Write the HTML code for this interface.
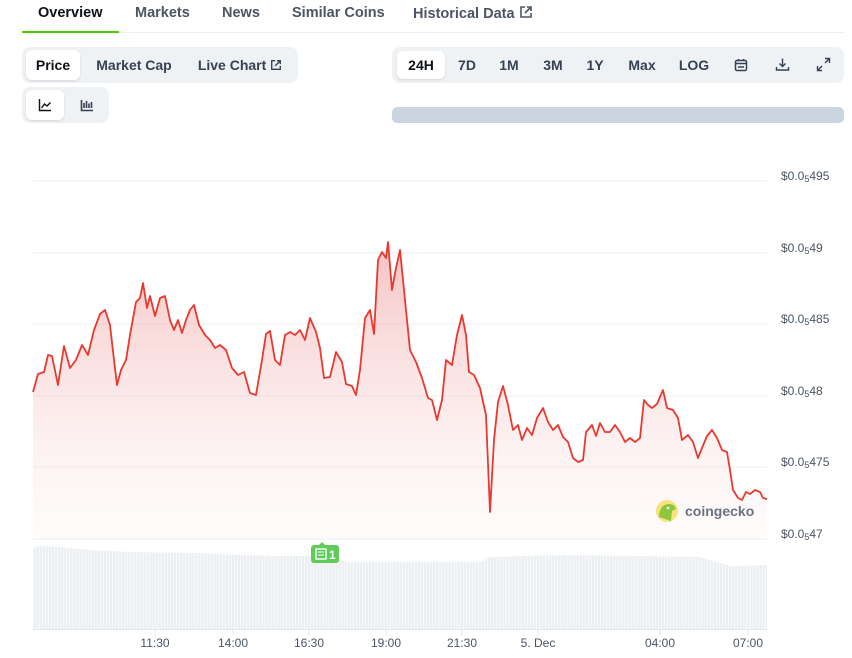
<!DOCTYPE html>
<html><head><meta charset="utf-8"><style>
*{margin:0;padding:0;box-sizing:border-box}
body{width:852px;height:658px;background:#fff;font-family:"Liberation Sans",sans-serif;position:relative;overflow:hidden;color:#4b5563}
.abs{position:absolute}
.tab{position:absolute;top:5px;font-size:14.5px;font-weight:bold;color:#4b5563}
.seg{position:absolute;background:#eff2f5;border-radius:8px}
.btn{position:absolute;font-size:14px;font-weight:bold;color:#364152;top:0;height:30px;line-height:30px;text-align:center}
.on{background:#fff;border-radius:6px;box-shadow:0 1px 2px rgba(0,0,0,.12);color:#0d1217}
.yl{position:absolute;left:781px;font-size:12px;color:#4b5563}
.yl sub{font-size:9px;vertical-align:-2px}
.xl{position:absolute;top:636px;font-size:12px;color:#4b5563;transform:translateX(-50%)}
</style></head><body>
<div class="tab" style="left:38px;color:#0d1217">Overview</div>
<div class="tab" style="left:135px">Markets</div>
<div class="tab" style="left:222px">News</div>
<div class="tab" style="left:292px">Similar Coins</div>
<div class="tab" style="left:413px">Historical Data <svg width="14" height="14" viewBox="0 0 14 14" style="vertical-align:-1px"><path d="M6 2H2v10h10V8M8 2h4v4M12 2L6 8" fill="none" stroke="#4b5563" stroke-width="1.6"/></svg></div>
<div class="abs" style="left:22px;top:32px;width:822px;height:1px;background:#eceff2"></div>
<div class="abs" style="left:22px;top:31px;width:97px;height:2px;background:#4bcc00"></div>

<div class="seg" style="left:22px;top:47px;width:276px;height:36px">
 <div class="btn on" style="left:4px;top:3px;width:54px">Price</div>
 <div class="btn" style="left:66px;top:3px;width:92px">Market Cap</div>
 <div class="btn" style="left:168px;top:3px;width:100px">Live Chart <svg width="12" height="12" viewBox="0 0 14 14" style="vertical-align:-1px"><path d="M6 2H2v10h10V8M8 2h4v4M12 2L6 8" fill="none" stroke="#364152" stroke-width="1.6"/></svg></div>
</div>
<div class="seg" style="left:22px;top:87px;width:87px;height:36px">
 <div class="btn on" style="left:4px;top:3px;width:38px"><svg width="14" height="14" viewBox="0 0 14 14" style="vertical-align:-2px"><path d="M1.5 1v11.5H13M3.5 10l3-4 2.5 2 3.5-3.5" fill="none" stroke="#0d1217" stroke-width="1.4"/></svg></div>
 <div class="btn" style="left:46px;top:3px;width:38px"><svg width="14" height="14" viewBox="0 0 14 14" style="vertical-align:-2px"><path d="M1.5 2v10.5H13M4 10V5M6.5 10V3M9 10V5.5M11.5 10V4" fill="none" stroke="#364152" stroke-width="1.6"/></svg></div>
</div>

<div class="seg" style="left:392px;top:47px;width:452px;height:36px">
 <div class="btn on" style="left:5px;top:4px;width:48px;height:28px;line-height:28px">24H</div>
 <div class="btn" style="left:58px;top:3px;width:34px">7D</div>
 <div class="btn" style="left:100px;top:3px;width:34px">1M</div>
 <div class="btn" style="left:143px;top:3px;width:36px">3M</div>
 <div class="btn" style="left:187px;top:3px;width:32px">1Y</div>
 <div class="btn" style="left:228px;top:3px;width:44px">Max</div>
 <div class="btn" style="left:280px;top:3px;width:44px">LOG</div>
 <svg class="abs" style="left:342px;top:11px" width="14" height="14" viewBox="0 0 14 14"><rect x="1.5" y="2.5" width="11" height="10" rx="1.5" fill="none" stroke="#364152" stroke-width="1.5"/><path d="M1.5 5.5h11M4.5 1v2M9.5 1v2M4 9h6" stroke="#364152" stroke-width="1.5"/></svg>
 <svg class="abs" style="left:383px;top:10px" width="15" height="15" viewBox="0 0 15 15"><path d="M7.5 1.5v8M4.5 6.5l3 3 3-3M1.5 10v3h12v-3" fill="none" stroke="#364152" stroke-width="1.4"/></svg>
 <svg class="abs" style="left:424px;top:10px" width="15" height="15" viewBox="0 0 15 15"><path d="M9 1.5h4.5V6M13.5 1.5L9 6M6 13.5H1.5V9M1.5 13.5L6 9" fill="none" stroke="#364152" stroke-width="1.4"/></svg>
</div>
<div class="abs" style="left:392px;top:107px;width:452px;height:16px;background:#cbd5df;border-radius:5px"></div>

<svg class="abs" style="left:0;top:0" width="852" height="658">
 <defs><linearGradient id="g" x1="0" y1="0" x2="0" y2="1"><stop offset="0" stop-color="#f0a8a8" stop-opacity=".7"/><stop offset="1" stop-color="#fde8e8" stop-opacity=".15"/></linearGradient>
 <pattern id="bars" width="3.05" height="10" patternUnits="userSpaceOnUse"><rect width="2.4" height="10" fill="#eceff2"/></pattern></defs>
 <g stroke="#eceff2" stroke-width="1">
  <line x1="33" y1="181" x2="767" y2="181"/><line x1="33" y1="253" x2="767" y2="253"/><line x1="33" y1="324" x2="767" y2="324"/><line x1="33" y1="396" x2="767" y2="396"/><line x1="33" y1="467" x2="767" y2="467"/><line x1="33" y1="539" x2="767" y2="539"/>
 </g>
 <polygon fill="url(#bars)" points="33,548 40,546 60,547 90,550 130,552 200,553 240,555 280,556 310,556 340,560 350,562 480,562 490,557 560,555 640,556 700,557 730,566 767,565 767,629 33,629"/>
 <line x1="33" y1="629.5" x2="767" y2="629.5" stroke="#e5e7eb"/>
 <g stroke="#e5e7eb"><line x1="155" y1="630" x2="155" y2="636"/><line x1="233" y1="630" x2="233" y2="636"/><line x1="309" y1="630" x2="309" y2="636"/><line x1="386" y1="630" x2="386" y2="636"/><line x1="462" y1="630" x2="462" y2="636"/><line x1="538" y1="630" x2="538" y2="636"/><line x1="660" y1="630" x2="660" y2="636"/><line x1="748" y1="630" x2="748" y2="636"/></g>
 <polygon fill="url(#g)" points="33,539 33,392 38,374 44,372 48,355 52,356 58,385 64,346 70,368 76,360 82,345 88,355 94,330 100,314 105,310 110,325 114,360 117,385 121,370 126,360 130,335 136,302 140,298 143,283 147,308 150,296 155,316 160,298 165,296 170,320 174,330 178,320 182,333 186,320 190,310 194,305 199,325 205,335 210,340 215,348 220,345 226,350 232,368 238,375 244,372 250,393 256,395 262,360 266,334 270,331 275,360 280,365 285,335 290,332 295,335 300,330 305,340 310,318 316,332 320,348 324,378 330,377 336,352 342,362 346,384 352,386 356,395 360,370 365,318 370,310 374,334 378,260 382,252 386,258 388,242 392,290 396,268 400,250 404,290 410,350 416,362 422,378 428,398 432,400 437,420 442,400 446,360 452,365 457,335 462,315 466,335 469,372 474,375 480,388 486,415 490,512 494,440 498,402 503,386 508,405 513,430 518,425 522,440 527,428 532,435 537,418 543,408 548,422 553,430 558,425 563,437 568,442 573,458 578,462 583,460 586,432 592,425 596,436 600,423 605,432 610,432 615,425 620,432 625,442 630,438 635,442 640,438 644,400 648,405 652,408 657,404 663,390 667,408 673,410 678,418 682,440 688,435 693,442 698,458 702,448 707,436 712,430 717,438 722,450 727,452 730,470 733,490 738,498 742,500 746,492 750,494 755,490 760,492 763,498 767,499 767,539"/>
 <polyline fill="none" stroke="#e8392f" stroke-width="1.8" stroke-linejoin="round" points="33,392 38,374 44,372 48,355 52,356 58,385 64,346 70,368 76,360 82,345 88,355 94,330 100,314 105,310 110,325 114,360 117,385 121,370 126,360 130,335 136,302 140,298 143,283 147,308 150,296 155,316 160,298 165,296 170,320 174,330 178,320 182,333 186,320 190,310 194,305 199,325 205,335 210,340 215,348 220,345 226,350 232,368 238,375 244,372 250,393 256,395 262,360 266,334 270,331 275,360 280,365 285,335 290,332 295,335 300,330 305,340 310,318 316,332 320,348 324,378 330,377 336,352 342,362 346,384 352,386 356,395 360,370 365,318 370,310 374,334 378,260 382,252 386,258 388,242 392,290 396,268 400,250 404,290 410,350 416,362 422,378 428,398 432,400 437,420 442,400 446,360 452,365 457,335 462,315 466,335 469,372 474,375 480,388 486,415 490,512 494,440 498,402 503,386 508,405 513,430 518,425 522,440 527,428 532,435 537,418 543,408 548,422 553,430 558,425 563,437 568,442 573,458 578,462 583,460 586,432 592,425 596,436 600,423 605,432 610,432 615,425 620,432 625,442 630,438 635,442 640,438 644,400 648,405 652,408 657,404 663,390 667,408 673,410 678,418 682,440 688,435 693,442 698,458 702,448 707,436 712,430 717,438 722,450 727,452 730,470 733,490 738,498 742,500 746,492 750,494 755,490 760,492 763,498 767,499"/>
 <circle cx="667" cy="511" r="11" fill="#f9e27c"/><path d="M659 517c0-8 4-13 10-13 4 0 6 2 7 5l-4 2c0 3-1 6-1 10z" fill="#8dc63f"/><circle cx="668" cy="508" r="1.3" fill="#fff"/>
 <text x="685" y="516" font-family="Liberation Sans" font-weight="bold" font-size="14" fill="#6b7280">coingecko</text>
 <rect x="311" y="545" width="28" height="18" rx="3" fill="#5fcc5a"/><path d="M322 542l3 3h-6z" fill="#5fcc5a"/>
 <rect x="316" y="549" width="10" height="10" fill="none" stroke="#fff" stroke-width="1.4"/><path d="M318 552h6M318 555h6" stroke="#fff"/>
 <text x="329" y="559" font-family="Liberation Sans" font-weight="bold" font-size="12" fill="#fff">1</text>
</svg>

<div class="yl" style="top:169px">$0.0<sub>5</sub>495</div>
<div class="yl" style="top:241px">$0.0<sub>5</sub>49</div>
<div class="yl" style="top:312px">$0.0<sub>5</sub>485</div>
<div class="yl" style="top:384px">$0.0<sub>5</sub>48</div>
<div class="yl" style="top:455px">$0.0<sub>5</sub>475</div>
<div class="yl" style="top:527px">$0.0<sub>5</sub>47</div>

<div class="xl" style="left:155px">11:30</div>
<div class="xl" style="left:233px">14:00</div>
<div class="xl" style="left:309px">16:30</div>
<div class="xl" style="left:386px">19:00</div>
<div class="xl" style="left:462px">21:30</div>
<div class="xl" style="left:538px">5. Dec</div>
<div class="xl" style="left:660px">04:00</div>
<div class="xl" style="left:748px">07:00</div>
</body></html>
